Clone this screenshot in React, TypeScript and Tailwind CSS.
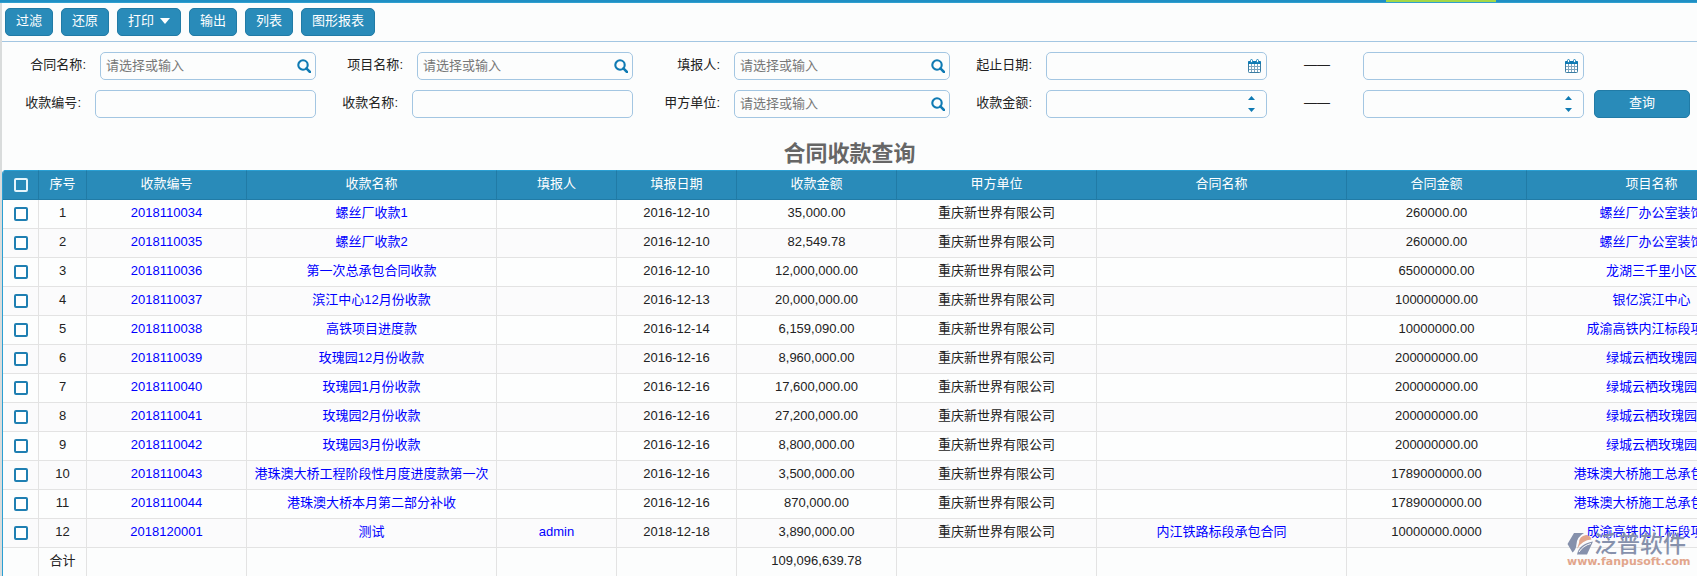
import type { ReactNode } from "react";

type Row = {
  code: string;
  name: string;
  reporter?: string;
  date: string;
  amount: string;
  contract?: string;
  total: string;
  project: string;
};

const OWNER = "重庆新世界有限公司";

const rows: Row[] = [
  { code: "2018110034", name: "螺丝厂收款1", date: "2016-12-10", amount: "35,000.00", total: "260000.00", project: "螺丝厂办公室装饰" },
  { code: "2018110035", name: "螺丝厂收款2", date: "2016-12-10", amount: "82,549.78", total: "260000.00", project: "螺丝厂办公室装饰" },
  { code: "2018110036", name: "第一次总承包合同收款", date: "2016-12-10", amount: "12,000,000.00", total: "65000000.00", project: "龙湖三千里小区" },
  { code: "2018110037", name: "滨江中心12月份收款", date: "2016-12-13", amount: "20,000,000.00", total: "100000000.00", project: "银亿滨江中心" },
  { code: "2018110038", name: "高铁项目进度款", date: "2016-12-14", amount: "6,159,090.00", total: "10000000.00", project: "成渝高铁内江标段项目" },
  { code: "2018110039", name: "玫瑰园12月份收款", date: "2016-12-16", amount: "8,960,000.00", total: "200000000.00", project: "绿城云栖玫瑰园" },
  { code: "2018110040", name: "玫瑰园1月份收款", date: "2016-12-16", amount: "17,600,000.00", total: "200000000.00", project: "绿城云栖玫瑰园" },
  { code: "2018110041", name: "玫瑰园2月份收款", date: "2016-12-16", amount: "27,200,000.00", total: "200000000.00", project: "绿城云栖玫瑰园" },
  { code: "2018110042", name: "玫瑰园3月份收款", date: "2016-12-16", amount: "8,800,000.00", total: "200000000.00", project: "绿城云栖玫瑰园" },
  { code: "2018110043", name: "港珠澳大桥工程阶段性月度进度款第一次", date: "2016-12-16", amount: "3,500,000.00", total: "1789000000.00", project: "港珠澳大桥施工总承包工程" },
  { code: "2018110044", name: "港珠澳大桥本月第二部分补收", date: "2016-12-16", amount: "870,000.00", total: "1789000000.00", project: "港珠澳大桥施工总承包工程" },
  { code: "2018120001", name: "测试", reporter: "admin", date: "2018-12-18", amount: "3,890,000.00", contract: "内江铁路标段承包合同", total: "10000000.0000", project: "成渝高铁内江标段项目" },
];

const headings = ["序号", "收款编号", "收款名称", "填报人", "填报日期", "收款金额", "甲方单位", "合同名称", "合同金额", "项目名称"];

const CELL = "h-[29px] border-r border-b border-[#e3e3e3] px-0 pt-0 pb-0.5 whitespace-nowrap";
const CHECK_CELL = "h-[29px] border-r border-b border-[#e3e3e3] p-0";
const HEAD = "h-[30px] border-t border-r border-b border-t-[#2a9fd3] border-r-[#217ba6] border-b-[#217ba6] px-0 pt-0 pb-0.5 font-normal";
const CHECK_HEAD = "h-[30px] border-t border-r border-b border-t-[#2a9fd3] border-r-[#217ba6] border-b-[#217ba6] p-0";
const CHECK = "block mx-auto size-[14px] appearance-none rounded-[2px] border-2";

function ToolButton({ children }: { children: ReactNode }) {
  return (
    <button
      type="button"
      className="flex h-7 items-center gap-1.5 rounded-[5px] border border-[#217ba6] bg-[#298bb9] px-2.5 pb-0.5 text-white"
    >
      {children}
    </button>
  );
}

function SearchIcon() {
  return (
    <svg viewBox="0 0 14 14" className="size-[14px]" fill="none" stroke="#0f7ab3" aria-hidden="true">
      <circle cx="6" cy="6" r="4.7" strokeWidth="2.1" />
      <path d="M9.4 9.4 L13 13" strokeWidth="2.5" strokeLinecap="round" />
    </svg>
  );
}

function CalendarIcon() {
  return (
    <svg viewBox="0 0 13 14" className="mr-px h-[14px] w-[13px]" aria-hidden="true">
      <rect x="0.5" y="3" width="12" height="10.5" rx="0.8" fill="#fff" stroke="#3a7da3" />
      <path d="M0 2.6 Q0 2 .8 2 H12.2 Q13 2 13 2.6 V5 H0 Z" fill="#0f7ab3" />
      <rect x="2.5" y="0.5" width="2" height="3" rx="1" fill="#fff" stroke="#0f7ab3" strokeWidth="0.9" />
      <rect x="8.5" y="0.5" width="2" height="3" rx="1" fill="#fff" stroke="#0f7ab3" strokeWidth="0.9" />
      <path d="M3.5 5 V13 M6.5 5 V13 M9.5 5 V13 M1 7.5 H12 M1 10.5 H12" stroke="#7fa6bf" strokeWidth="1" />
    </svg>
  );
}

function SpinArrows() {
  return (
    <svg viewBox="0 0 7 16" className="mr-[7px] h-4 w-[7px]" fill="#0f7ab3" aria-hidden="true">
      <path d="M3.5 0 L7 4 H0 Z" />
      <path d="M0 12 H7 L3.5 16 Z" />
    </svg>
  );
}

type FieldProps = { id: string; label: string; kind?: "search" | "date" | "number"; dash?: boolean };

function Field({ id, label, kind, dash }: FieldProps) {
  const search = kind === "search";
  return (
    <div className="flex items-center justify-end">
      {dash ? (
        <label htmlFor={id} aria-label={label} className="pr-[33px] pb-0.5 text-[#222]">——</label>
      ) : (
        <label htmlFor={id} className="pr-[14px] pb-0.5 text-[#222]">{label}:</label>
      )}
      <div
        className={
          "flex h-7 items-center rounded-[5px] border border-[#a3c6e2] bg-[#fcfdfd] pr-1 pl-[5px] " +
          (search ? "w-[216px]" : "w-[221px]")
        }
      >
        <input
          id={id}
          type="text"
          placeholder={search ? "请选择或输入" : undefined}
          className="h-full min-w-0 flex-1 bg-transparent pb-0.5 outline-none placeholder:text-[#777]"
        />
        {kind && (
          <button type="button" aria-label={label} className="flex items-center">
            {kind === "search" && <SearchIcon />}
            {kind === "date" && <CalendarIcon />}
            {kind === "number" && <SpinArrows />}
          </button>
        )}
      </div>
    </div>
  );
}

function Watermark() {
  return (
    <div className="pointer-events-none absolute right-2.5 bottom-2 flex w-[120px] flex-col">
      <div className="flex h-6 items-center">
        <svg viewBox="0 0 27 24" className="h-6 w-[27px] shrink-0" aria-hidden="true">
          <path d="M7 1 H17 Q10 5 9.500 12 Q9 18 5.500 20.500 L0.500 12 Z" fill="#8691ac" />
          <path d="M12 11 Q12 4 19 3 Q23 3 24.500 7.500 Q15 8 10 17 Z" fill="#e2a68c" />
          <path d="M10 22.500 Q12 12 26 9.500 L20 22.500 Z" fill="#8691ac" />
          <path d="M12 20 Q16 13.500 24 11.500" fill="none" stroke="#fff" strokeWidth="1" />
        </svg>
        <span className="text-[23px] leading-6 font-medium whitespace-nowrap text-[#8691ac]">泛普软件</span>
      </div>
      <span className="font-['DejaVu_Sans'] text-[11px] leading-3 font-bold text-[#e2a68c]">www.fanpusoft.com</span>
    </div>
  );
}

export default function App() {
  return (
    <div className="relative flex h-screen flex-col overflow-hidden bg-[#fcfdfd] font-['Liberation_Sans','Noto_Sans_CJK_SC',sans-serif] text-[13px] leading-5 text-[#222]">
      <div className="flex h-[3px] shrink-0 items-end justify-end border-b border-[#2f9fcf] bg-[#1f8fc4] pr-[201px]">
        <div className="h-0.5 w-[110px] bg-[#a5d848]" />
      </div>

      <div className="flex min-h-0 flex-1 flex-col border-l-2 border-[#d9dcdc]">
        <div className="flex gap-2 border-b border-[#a3c6e2] py-[5px] pl-[3px]">
          <ToolButton>过滤</ToolButton>
          <ToolButton>还原</ToolButton>
          <ToolButton>
            打印
            <svg viewBox="0 0 10 6" className="h-1.5 w-2.5" fill="#fff" aria-hidden="true">
              <path d="M0 0 H10 L5 6 Z" />
            </svg>
          </ToolButton>
          <ToolButton>输出</ToolButton>
          <ToolButton>列表</ToolButton>
          <ToolButton>图形报表</ToolButton>
        </div>

        <form className="-ml-[3px] flex items-end gap-2.5 pt-2.5 pr-[7px]">
          <div className="grid flex-1 grid-cols-5 gap-y-2.5">
            <Field id="contract" label="合同名称" kind="search" />
            <Field id="project" label="项目名称" kind="search" />
            <Field id="reporter" label="填报人" kind="search" />
            <Field id="date-from" label="起止日期" kind="date" />
            <Field id="date-to" label="截止日期" kind="date" dash />
            <Field id="code" label="收款编号" />
            <Field id="name" label="收款名称" />
            <Field id="owner" label="甲方单位" kind="search" />
            <Field id="amount-from" label="收款金额" kind="number" />
            <Field id="amount-to" label="最大金额" kind="number" dash />
          </div>
          <button type="button" className="h-7 w-24 rounded-[5px] border border-[#217ba6] bg-[#298bb9] pb-0.5 text-white">
            查询
          </button>
        </form>

        <h1 className="pt-[22px] pb-0.5 text-center text-[22px] leading-7 font-bold text-[#666]">合同收款查询</h1>

        <div className="min-h-0 flex-1 overflow-hidden rounded-tl-[4px] border-l border-[#2a9fd3]">
          <table className="w-[1774px] table-fixed border-separate border-spacing-0 text-center">
            <colgroup>
              <col className="w-9" />
              <col className="w-12" />
              <col className="w-[160px]" />
              <col className="w-[250px]" />
              <col className="w-[120px]" />
              <col className="w-[120px]" />
              <col className="w-[160px]" />
              <col className="w-[200px]" />
              <col className="w-[250px]" />
              <col className="w-[180px]" />
              <col className="w-[250px]" />
            </colgroup>
            <thead className="bg-[#298bb9] text-white">
              <tr>
                <th className={CHECK_HEAD}>
                  <input type="checkbox" aria-label="全选" className={CHECK + " border-[#e6f5fb]"} />
                </th>
                {headings.map((h) => (
                  <th key={h} className={HEAD}>{h}</th>
                ))}
              </tr>
            </thead>
            <tbody>
              {rows.map((r, i) => (
                <tr key={r.code} className="odd:bg-[#fdfefe] even:bg-[#fbfbfc]">
                  <td className={CHECK_CELL}>
                    <input type="checkbox" aria-label={r.code} className={CHECK + " border-[#1f7fb2] bg-white"} />
                  </td>
                  <td className={CELL}>{i + 1}</td>
                  <td className={CELL}><a href="#" className="text-[#0000ff]">{r.code}</a></td>
                  <td className={CELL}><a href="#" className="text-[#0000ff]">{r.name}</a></td>
                  <td className={CELL}>{r.reporter && <a href="#" className="text-[#0000ff]">{r.reporter}</a>}</td>
                  <td className={CELL}>{r.date}</td>
                  <td className={CELL}>{r.amount}</td>
                  <td className={CELL}>{OWNER}</td>
                  <td className={CELL}>{r.contract && <a href="#" className="text-[#0000ff]">{r.contract}</a>}</td>
                  <td className={CELL}>{r.total}</td>
                  <td className={CELL}><a href="#" className="text-[#0000ff]">{r.project}</a></td>
                </tr>
              ))}
              <tr>
                <td className={CELL} />
                <td className={CELL}>合计</td>
                <td className={CELL} />
                <td className={CELL} />
                <td className={CELL} />
                <td className={CELL} />
                <td className={CELL}>109,096,639.78</td>
                <td className={CELL} />
                <td className={CELL} />
                <td className={CELL} />
                <td className={CELL} />
              </tr>
            </tbody>
          </table>
        </div>
      </div>

      <Watermark />
    </div>
  );
}
